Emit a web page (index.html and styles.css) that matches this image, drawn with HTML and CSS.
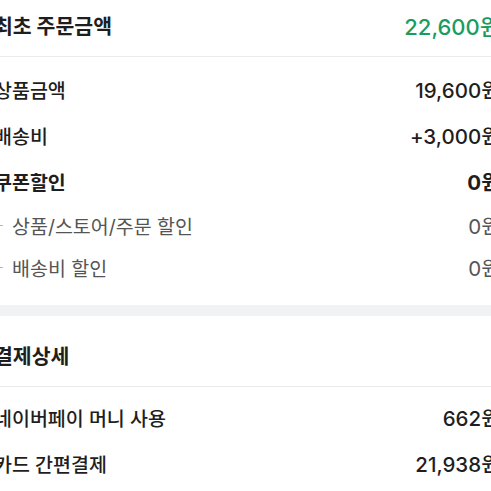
FILE: index.html
```
<!DOCTYPE html>
<html lang="ko">
<head>
<meta charset="utf-8">
<link rel="stylesheet" href="styles.css">
</head>
<body>
<div class="page">
  <section class="block">
    <div class="head">
      <span class="head-label">최초 주문금액</span>
      <span class="head-value green">22,600원</span>
    </div>
    <div class="rows">
      <div class="row"><span>상품금액</span><span class="val">19,600원</span></div>
      <div class="row"><span>배송비</span><span class="val">+3,000원</span></div>
      <div class="row strong"><span>쿠폰할인</span><span class="val">0원</span></div>
      <div class="row sub"><span class="sub-label"><i class="dash"></i>상품/스토어/주문 할인</span><span class="val">0원</span></div>
      <div class="row sub"><span class="sub-label"><i class="dash"></i>배송비 할인</span><span class="val">0원</span></div>
    </div>
  </section>
  <div class="gap"></div>
  <section class="block">
    <div class="head head2">
      <span class="head-label">결제상세</span>
    </div>
    <div class="rows rows2">
      <div class="row"><span>네이버페이 머니 사용</span><span class="val">662원</span></div>
      <div class="row"><span>카드 간편결제</span><span class="val">21,938원</span></div>
    </div>
  </section>
</div>
</body>
</html>
```
FILE: styles.css
```
html, body {
  margin: 0;
  padding: 0;
  background: #fff;
  overflow: hidden;
}
body {
  font-family: "Inter", "Noto Sans CJK KR", "Noto Sans", sans-serif;
  color: #1e1e1e;
}
.page {
  margin-left: -6px;
  width: 506px;
}
.head {
  display: flex;
  justify-content: space-between;
  align-items: center;
  height: 57px;
  box-sizing: border-box;
  padding-bottom: 7px;
  border-bottom: 1px solid #ececec;
}
.head-label {
  font-size: 20.5px;
  font-weight: 700;
}
.head-value {
  font-size: 22px;
  font-weight: 500;
}
.green { color: #1a9c5e; }
.rows {
  padding: 9px 0 17px;
}
.row {
  display: flex;
  justify-content: space-between;
  align-items: center;
  height: 46px;
  font-size: 19.5px;
  font-weight: 500;
}
.val {
  font-size: 20.5px;
}
.row.strong { font-weight: 700; }
.row.sub {
  height: 42px;
  color: #555;
  font-weight: 400;
}
.sub-label {
  display: flex;
  align-items: center;
}
.dash {
  display: inline-block;
  width: 9px;
  height: 1px;
  background: #b5b5b5;
  margin-right: 9px;
}
.gap {
  height: 11px;
  background: #f1f2f4;
}
.head2 {
  height: 71px;
  padding-bottom: 0;
  padding-top: 8px;
}
.rows2 {
  padding: 7px 0 10px;
}
```
